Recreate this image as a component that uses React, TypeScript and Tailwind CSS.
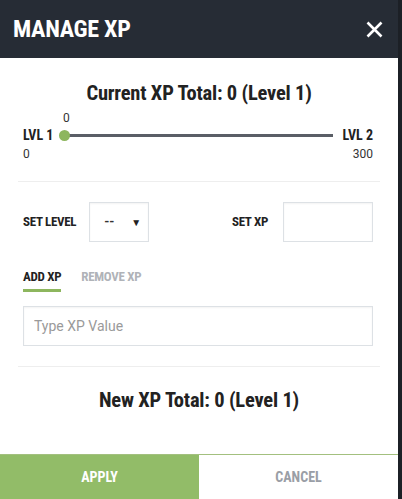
import { useState } from "react";

const cond = "font-['Roboto_Condensed','Liberation_Sans_Narrow',Roboto,sans-serif]";

export default function App() {
  const [tab, setTab] = useState<"add" | "remove">("add");

  return (
    <div className="flex h-[499px] w-[402px] bg-[#1c2026] font-['Roboto',sans-serif]">
      <div className="flex w-[398px] flex-col bg-white">
        {/* header */}
        <div className="flex h-[58px] items-center justify-between bg-[#262c35] pl-[13px] pr-[15px]">
          <h1 className={`${cond} text-[24px] font-bold tracking-[-0.3px] text-white`}>MANAGE XP</h1>
          <svg width="17" height="17" viewBox="0 0 17 17" className="text-white">
            <path d="M1.5 1.5 L15.5 15.5 M15.5 1.5 L1.5 15.5" stroke="currentColor" strokeWidth="2.6" />
          </svg>
        </div>

        <div className="flex flex-1 flex-col px-[18px]">
          <h2 className={`${cond} mt-[23px] text-center text-[20.5px] font-bold leading-[24px] tracking-[-0.2px] text-[#222]`}>
            Current XP Total: 0 (Level 1)
          </h2>

          {/* xp slider */}
          <div className="mt-[6px] pl-[5px] pr-[7px]">
            <div className="pl-[40px] text-[12px] leading-[14px] text-[#333]">0</div>
            <div className="flex items-center">
              <span className={`${cond} w-[41px] text-[14px] font-bold text-[#222]`}>LVL 1</span>
              <div className="relative h-[3px] flex-1 bg-[#5a5e66]">
                <div className="absolute left-[-5px] top-[-4px] h-[11px] w-[11px] rounded-full bg-[#8db65e]" />
              </div>
              <span className={`${cond} ml-[10px] text-[14px] font-bold text-[#222]`}>LVL 2</span>
            </div>
            <div className="flex justify-between text-[12px] leading-[16px] text-[#333]">
              <span>0</span>
              <span>300</span>
            </div>
          </div>

          <div className="mt-[19px] h-px bg-[#eeeeee]" />

          {/* set level / xp */}
          <div className="mt-[20px] flex items-center pl-[5px] pr-[7px]">
            <span className={`${cond} text-[13px] font-bold tracking-[-0.3px] text-[#222]`}>SET LEVEL</span>
            <div className="ml-[13px] flex h-[40px] w-[60px] items-center justify-between border border-[#dde1e5] pl-[14px] pr-[7px] shadow-[inset_0_1px_2px_rgba(0,0,0,0.05)]">
              <span className="text-[13px] font-bold text-[#333]">--</span>
              <span className="text-[10px] text-[#222]">▼</span>
            </div>
            <span className={`${cond} ml-auto text-[13px] font-bold tracking-[-0.3px] text-[#222]`}>SET XP</span>
            <div className="ml-[15px] h-[40px] w-[90px] border border-[#dde1e5] shadow-[inset_0_1px_2px_rgba(0,0,0,0.05)]" />
          </div>

          {/* tabs */}
          <div className="mt-[27px] flex gap-[20px] pl-[5px] pr-[7px]">
            <button
              onClick={() => setTab("add")}
              className={`${cond} border-b-[3px] pb-[4px] text-[13px] font-bold leading-[16px] tracking-[-0.3px] ${tab === "add" ? "border-[#8db65e] text-[#222]" : "border-transparent text-[#b0b3b8]"}`}
            >
              ADD XP
            </button>
            <button
              onClick={() => setTab("remove")}
              className={`${cond} border-b-[3px] pb-[4px] text-[13px] font-bold leading-[16px] tracking-[-0.3px] ${tab === "remove" ? "border-[#8db65e] text-[#222]" : "border-transparent text-[#b0b3b8]"}`}
            >
              REMOVE XP
            </button>
          </div>

          <div className="mt-[14px] pl-[5px] pr-[7px]">
            <input
              placeholder="Type XP Value"
              className="h-[40px] w-full border border-[#dde1e5] px-[10px] text-[14px] text-[#333] outline-none placeholder:text-[#9a9a9a] shadow-[inset_0_1px_2px_rgba(0,0,0,0.05)]"
            />
          </div>

          <div className="mt-[20px] h-px bg-[#eeeeee]" />

          <h2 className={`${cond} mt-[21px] text-center text-[20.5px] font-bold leading-[24px] tracking-[-0.2px] text-[#222]`}>
            New XP Total: 0 (Level 1)
          </h2>
        </div>

        {/* footer */}
        <div className="flex h-[45px] border-t border-[#a3c07f]">
          <button className={`${cond} flex-1 bg-[#92bc68] text-[14px] font-bold text-white`}>APPLY</button>
          <button className={`${cond} flex-1 bg-white text-[14px] font-bold text-[#9a9ea6]`}>CANCEL</button>
        </div>
      </div>
    </div>
  );
}
